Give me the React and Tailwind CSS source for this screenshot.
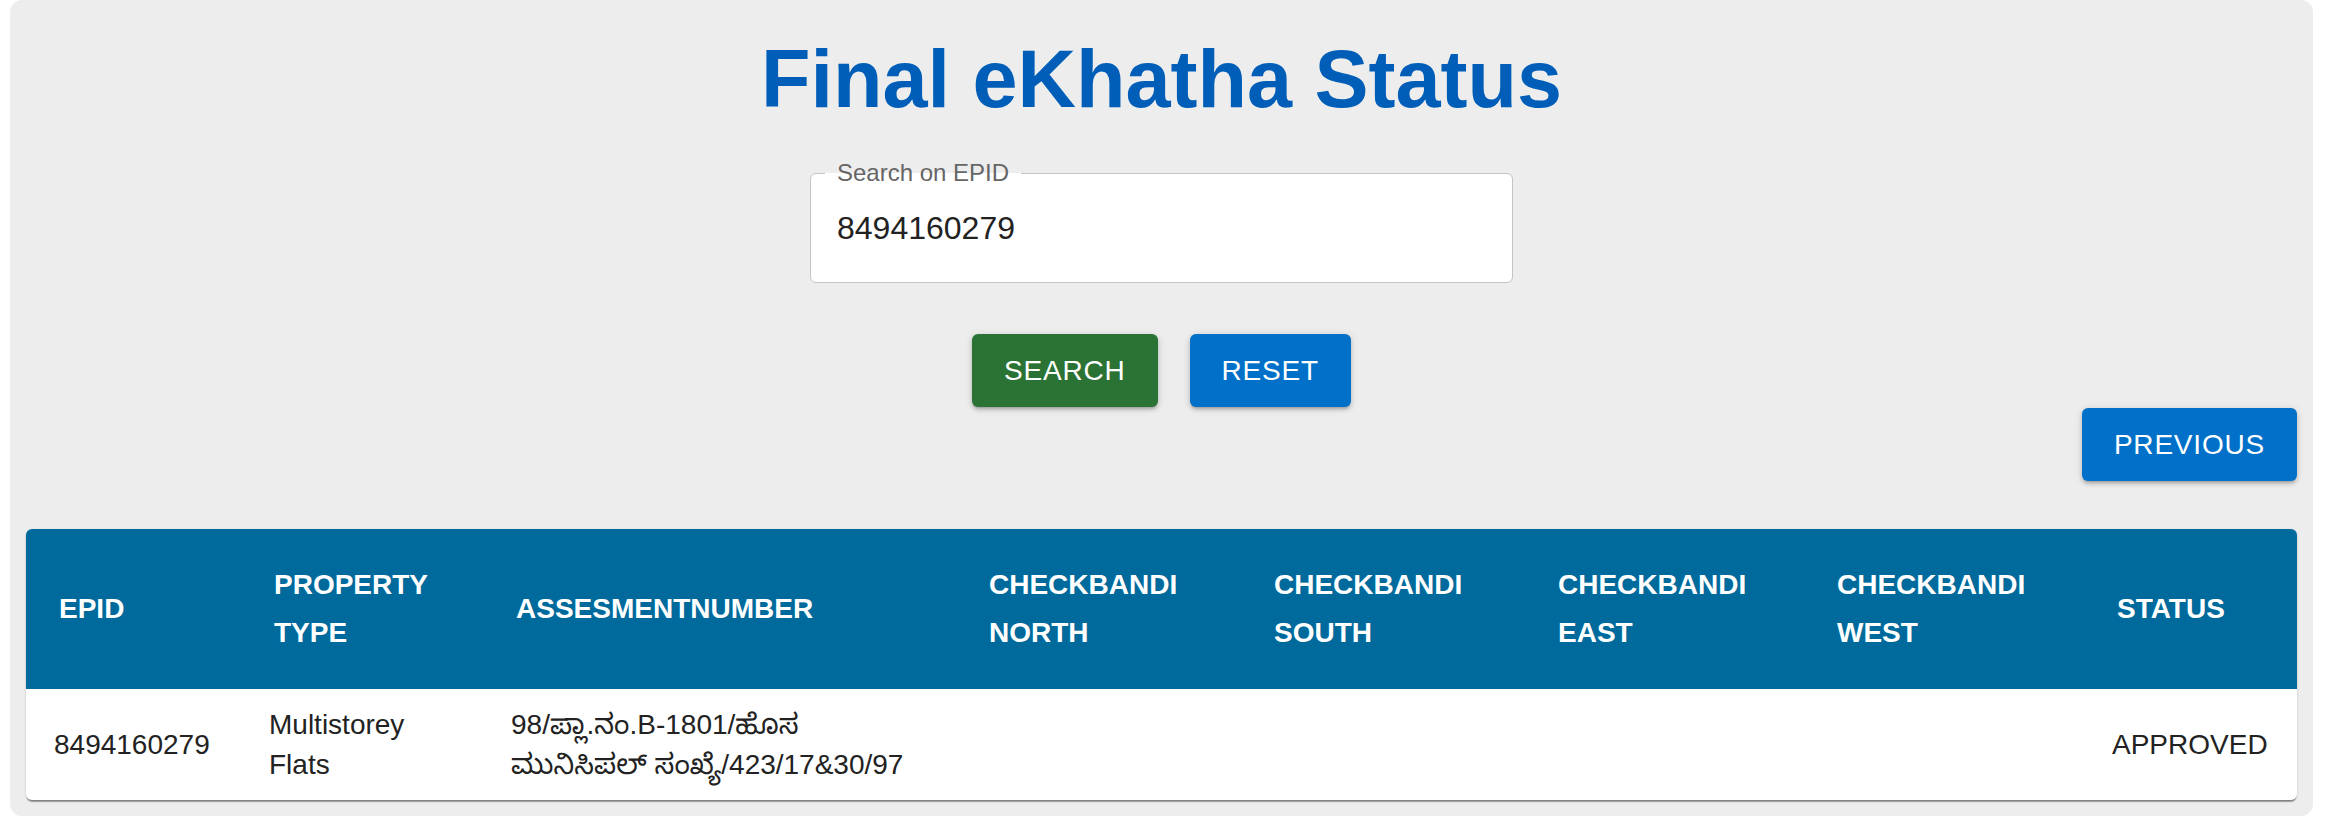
import React, { useState } from 'react';

const COLS = [
  { key: 'epid', label: 'EPID', w: 'w-[215px]' },
  { key: 'type', label: 'PROPERTY TYPE', w: 'w-[242px]' },
  { key: 'assess', label: 'ASSESMENTNUMBER', w: 'w-[473px]' },
  { key: 'north', label: 'CHECKBANDI NORTH', w: 'w-[285px]' },
  { key: 'south', label: 'CHECKBANDI SOUTH', w: 'w-[284px]' },
  { key: 'east', label: 'CHECKBANDI EAST', w: 'w-[279px]' },
  { key: 'west', label: 'CHECKBANDI WEST', w: 'w-[280px]' },
  { key: 'status', label: 'STATUS', w: 'w-[214px]' },
];

const ROWS = [
  {
    epid: '8494160279',
    type: 'Multistorey Flats',
    assess: ['98/ಪ್ಲಾ.ನಂ.B-1801/ಹೊಸ', 'ಮುನಿಸಿಪಲ್ ಸಂಖ್ಯೆ/423/17&30/97'],
    north: '',
    south: '',
    east: '',
    west: '',
    status: 'APPROVED',
  },
];

const font = "font-['Liberation_Sans','Noto_Sans_Kannada','Noto_Sans',sans-serif]";
const btnShadow = 'shadow-[0_3px_3px_-2px_rgba(0,0,0,0.2),0_3px_4px_rgba(0,0,0,0.14),0_1px_8px_rgba(0,0,0,0.12)]';

export default function App() {
  const [epid, setEpid] = useState('8494160279');

  return (
    <div className={`min-h-screen bg-white ${font}`}>
      <div className="ml-[10px] w-[2303px] bg-[#ededed] rounded-xl px-4 pt-[31px] pb-4">
        <h1 className="text-center text-[81px] leading-[1.2] font-bold text-[#005eb8]">Final eKhatha Status</h1>

        <div className="flex justify-center mt-[45px]">
          <div className="relative w-[703px] h-[110px] bg-white border border-[#c4c4c4] rounded-md flex items-center pl-[26px]">
            <label className="absolute left-[14px] top-[-13px] px-3 text-[24px] leading-[24px] text-[#666] bg-linear-to-b from-[#ededed] from-50% to-white to-50%">
              Search on EPID
            </label>
            <input
              value={epid}
              onChange={e => setEpid(e.target.value)}
              className="w-full text-[32px] text-[#222] outline-none bg-transparent"
            />
          </div>
        </div>

        <div className="flex justify-center gap-8 mt-[51px]">
          <button className={`h-[73px] px-8 rounded-md bg-[#2a7335] text-white text-[28px] tracking-[0.8px] ${btnShadow}`}>SEARCH</button>
          <button onClick={() => setEpid('')} className={`h-[73px] px-8 rounded-md bg-[#0070c8] text-white text-[28px] tracking-[0.8px] ${btnShadow}`}>RESET</button>
        </div>

        <div className="flex justify-end mt-px">
          <button className={`h-[73px] px-8 rounded-md bg-[#0070c8] text-white text-[28px] tracking-[0.8px] ${btnShadow}`}>PREVIOUS</button>
        </div>

        <div className="mt-12 rounded-md overflow-hidden bg-white shadow-[0_3px_1px_-1px_rgba(0,0,0,0.3),0_1px_1px_rgba(0,0,0,0.14),0_1px_3px_rgba(0,0,0,0.12)]">
          <table className="w-full table-fixed border-collapse">
            <thead>
              <tr className="bg-[#006a9c] h-[160px]">
                {COLS.map(c => (
                  <th key={c.key} className={`${c.w} text-left align-middle pl-[33px] pr-8 text-white text-[28px] leading-[48px] font-bold`}>
                    {c.label}
                  </th>
                ))}
              </tr>
            </thead>
            <tbody>
              {ROWS.map(r => (
                <tr key={r.epid} className="h-[111px]">
                  {COLS.map(c => (
                    <td key={c.key} className="pl-7 pr-8 align-middle text-[28px] leading-[40px] text-[#222]">
                      {c.key === 'assess'
                        ? <span className="whitespace-nowrap">{r.assess[0]}<br />{r.assess[1]}</span>
                        : r[c.key]}
                    </td>
                  ))}
                </tr>
              ))}
            </tbody>
          </table>
        </div>
      </div>
    </div>
  );
}
